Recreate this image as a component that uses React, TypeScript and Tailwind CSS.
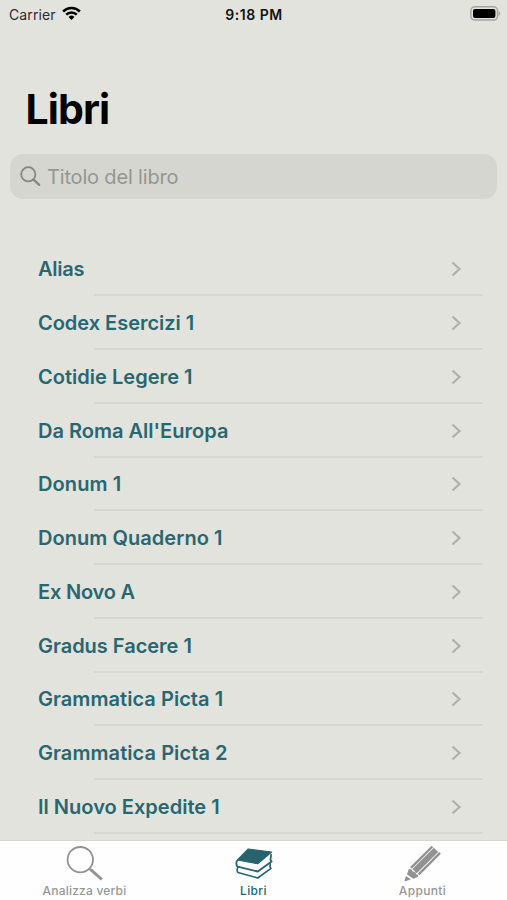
const books = [
  { title: "Alias", spacing: "tracking-[-0.25px]" },
  { title: "Codex Esercizi 1", spacing: "tracking-[-0.02px]" },
  { title: "Cotidie Legere 1", spacing: "tracking-[0.03px]" },
  { title: "Da Roma All'Europa", spacing: "tracking-[0.01px]" },
  { title: "Donum 1", spacing: "tracking-[0.1px]" },
  { title: "Donum Quaderno 1", spacing: "tracking-[0.05px]" },
  { title: "Ex Novo A", spacing: "tracking-[-0.2px]" },
  { title: "Gradus Facere 1", spacing: "tracking-[-0.02px]" },
  { title: "Grammatica Picta 1", spacing: "tracking-[0.05px]" },
  { title: "Grammatica Picta 2", spacing: "tracking-[0.07px]" },
  { title: "Il Nuovo Expedite 1", spacing: "tracking-[0.02px]" },
];

function StatusBar() {
  return (
    <div className="grid h-7 shrink-0 grid-cols-3 items-center pl-[9px] pr-[6px] text-[14px] text-[#111]">
      <div className="flex items-center gap-[6px]">
        <span className="tracking-[0.1px] text-[#2b2c2a]">Carrier</span>
        <svg width="19" height="15" viewBox="0 0 19 15" className="-mt-0.5">
          <g fill="none" stroke="#000" strokeWidth="2.5">
            <path d="M1.1 5.5a12 12 0 0 1 16.8 0" />
            <path d="M4.2 8.7a7.6 7.6 0 0 1 10.6 0" />
          </g>
          <path d="M6.6 11a4.2 4.2 0 0 1 5.8 0L9.5 14Z" fill="#000" />
        </svg>
      </div>
      <span className="-ml-0.5 text-center font-semibold tracking-[0.5px]">9:18 PM</span>
      <svg width="31" height="15" viewBox="0 0 31 15" className="justify-self-end -mt-0.5">
        <rect x="0.9" y="0.8" width="26.6" height="13.2" rx="3.8" fill="none" stroke="#a4a5a0" strokeWidth="1.4" />
        <rect x="3" y="2.9" width="22.4" height="9" rx="2" fill="#000" />
        <path d="M28.7 5.1c2 .8 2 3.8 0 4.6Z" fill="#a4a5a0" />
      </svg>
    </div>
  );
}

function GlassIcon() {
  return (
    <svg width="38" height="36" viewBox="0 0 38 36" fill="none" stroke="#929292">
      <circle cx="14.3" cy="13.7" r="12.7" strokeWidth="1.8" />
      <path d="m23.3 22.7 2 2" strokeWidth="2" />
      <path d="m24.8 23.7 11 9.8" strokeWidth="3" />
    </svg>
  );
}

function BooksIcon() {
  return (
    <svg width="38" height="34" viewBox="0 0 38 34" stroke="#28636f" strokeLinejoin="round" strokeLinecap="round">
      <path d="M3.2 20.2c-1.3 1.1-1.5 4.1-.2 5.2l19.7 5.6L36 21.4l-1-1.3.3-3.4" fill="#fff" strokeWidth="1.6" />
      <path d="M2.4 13.4c-1.4 1.2-1.5 5 .2 6.3l20.2 4.8L36.6 14.6l-1.2-1.8.7-5" fill="#fff" strokeWidth="1.8" />
      <path d="M2.4 13 13.3 2 36.6 5.1 22.7 16.7Z" fill="#28636f" strokeWidth="1.2" />
    </svg>
  );
}

function PencilIcon() {
  return (
    <svg width="38" height="38" viewBox="0 0 38 38" fill="none" stroke="#929292">
      <path d="M7 22.9 28.4 1.5" strokeWidth="2.4" />
      <path d="M10.6 26.2 32 4.8" strokeWidth="6" />
      <path d="M14.7 29.3 36.1 7.9" strokeWidth="2.4" />
      <path
        d="M4.6 24.5c1.7-.9 3.6-.2 4 2.1 2.3-.1 3.4.8 3.5 2.6 2 0 2.8 1.2 1.7 2.6l-4.4 2-6.4-4.3Z"
        fill="#929292"
        stroke="none"
      />
      <path d="m2 31 4.8 3.3-5.1 2c-.9.3-1.2-.2-1.1-1Z" fill="#929292" stroke="none" />
    </svg>
  );
}

export default function App() {
  return (
    <div className="flex h-[900px] w-[507px] flex-col overflow-hidden bg-[#e2e3dc] font-['Inter','Liberation_Sans',sans-serif]">
      <StatusBar />

      <h1 className="mt-[56px] pl-[25.5px] text-[41px] leading-[50px] font-bold tracking-[-0.9px] text-black">Libri</h1>

      <label className="mx-[10px] mt-[20px] flex h-[45px] shrink-0 items-center rounded-[13px] bg-[#d5d6d0] pl-[10px]">
        <svg width="21" height="21" viewBox="0 0 21 21" fill="none" stroke="#858681" strokeLinecap="round">
          <circle cx="8.3" cy="8.3" r="7.1" strokeWidth="1.8" />
          <path d="m13.6 13.6 5.6 5.3" strokeWidth="2.2" />
        </svg>
        <input
          type="text"
          placeholder="Titolo del libro"
          className="ml-[6px] w-[400px] bg-transparent pt-px text-[20px] tracking-[-0.17px] outline-none placeholder:text-[#959691]"
        />
      </label>

      <ul className="mt-[43.5px] min-h-0 flex-1 overflow-hidden">
        {books.map((book) => (
          <li key={book.title} className="flex h-[53.75px] flex-col pl-[38px] pr-[24px]">
            <div className="flex flex-1 items-center justify-between pt-0.5 pr-[21px]">
              <span className={`text-[20px] leading-6 font-semibold whitespace-nowrap text-[#286771] ${book.spacing}`}>
                {book.title}
              </span>
              <svg width="11" height="16" viewBox="0 0 11 16" fill="none" stroke="#afb0ab" strokeWidth="2.2">
                <path d="m1.5 1.5 7 6.5-7 6.5" />
              </svg>
            </div>
            <div className="ml-[56px] h-[2px] shrink-0 bg-[#d7d8d2]" />
          </li>
        ))}
      </ul>

      <nav className="grid h-[60px] shrink-0 grid-cols-3 border-t border-[#d5d6d0] bg-[#fdfefd] text-[12px] font-medium text-[#979797]">
        <div className="flex flex-col items-center">
          <div className="flex h-[42px] items-center pt-1">
            <GlassIcon />
          </div>
          <span className="leading-4 tracking-[0.2px]">Analizza verbi</span>
        </div>
        <div className="flex flex-col items-center text-[#28636f]">
          <div className="flex h-[42px] items-center pt-1">
            <BooksIcon />
          </div>
          <span className="leading-4 tracking-[0.35px]">Libri</span>
        </div>
        <div className="flex flex-col items-center">
          <div className="flex h-[42px] items-center pt-1">
            <PencilIcon />
          </div>
          <span className="leading-4 tracking-[0.35px]">Appunti</span>
        </div>
      </nav>
    </div>
  );
}
